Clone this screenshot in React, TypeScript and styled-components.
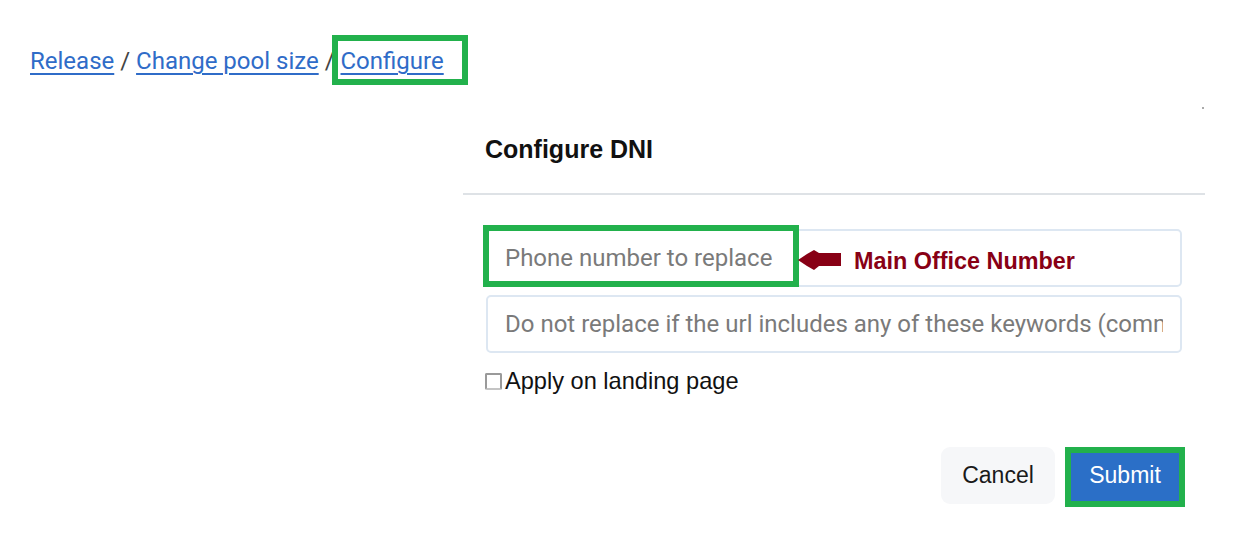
import React from "react";
import styled, { createGlobalStyle } from "styled-components";

const GlobalStyle = createGlobalStyle`
  html, body { margin: 0; padding: 0; background: #ffffff; }
  body { font-family: "Liberation Sans", Arial, sans-serif; color: #212529; }
  *, *::before, *::after { box-sizing: border-box; }
`;

const Page = styled.div`
  width: 1234px;
  height: 534px;
  overflow: hidden;
  display: flex;
  flex-direction: column;
`;

const Breadcrumb = styled.nav`
  padding: 47px 0 0 30px;
  height: 100px;
  font-family: "Roboto", "Liberation Sans", sans-serif;
  font-size: 24px;
  line-height: 28px;
  color: #333;
  white-space: nowrap;
`;

const Crumb = styled.a`
  color: #2f6cc8;
  text-decoration: underline;
  text-decoration-thickness: 2px;
  text-underline-offset: 4px;
`;

const Highlight = styled.span`
  position: relative;
  &::after {
    content: "";
    position: absolute;
    left: -9px;
    top: -12px;
    width: 136px;
    height: 50px;
    border: 6px solid #22b14c;
    pointer-events: none;
  }
`;

const Sep = styled.span`
  color: #444;
`;

const Modal = styled.section`
  margin-left: 463px;
  width: 742px;
  position: relative;
  display: flex;
  flex-direction: column;
`;

const Dot = styled.span`
  position: absolute;
  right: 1px;
  top: 7px;
  width: 2px;
  height: 2px;
  background: #aaa;
`;

const Header = styled.header`
  padding: 34px 22px 29px;
  border-bottom: 2px solid #dee2e6;
`;

const Title = styled.h5`
  margin: 0;
  font-family: "Liberation Sans", Arial, sans-serif;
  font-weight: 700;
  font-size: 25px;
  line-height: 30px;
  color: #111;
`;

const Body = styled.div`
  padding: 34px 23px 0 22px;
  display: flex;
  flex-direction: column;
  gap: 8px;
`;

const Field = styled.div`
  position: relative;
  margin-left: 1px;
`;

const Input = styled.input`
  display: block;
  width: 100%;
  height: 58px;
  padding: 0 17px;
  border: 2px solid #dde7f2;
  border-radius: 5px;
  font-family: "Roboto", "Liberation Sans", sans-serif;
  font-size: 24px;
  color: #333;
  background: #fff;
  outline: none;
  &::placeholder {
    color: #7a7a7a;
  }
`;

const FieldMark = styled.span`
  position: absolute;
  left: -3px;
  top: -4px;
  width: 316px;
  height: 62px;
  border: 6px solid #22b14c;
  pointer-events: none;
`;

const Note = styled.span`
  position: absolute;
  left: 312px;
  top: 19px;
  display: flex;
  align-items: center;
  gap: 12px;
  pointer-events: none;
`;

const NoteText = styled.span`
  font-family: "Liberation Sans", Arial, sans-serif;
  font-weight: 700;
  font-size: 23.4px;
  line-height: 22px;
  color: #880015;
  padding-top: 2px;
`;

const CheckRow = styled.label`
  display: flex;
  align-items: center;
  margin-top: 5px;
  font-family: "Liberation Sans", Arial, sans-serif;
  font-size: 23.6px;
  line-height: 30px;
  color: #111;
`;

const Check = styled.input`
  width: 17px;
  height: 17px;
  margin: 0 3px 0 0;
  appearance: none;
  border: 2px solid #9a9a9a;
  border-bottom-color: #c4c4c4;
  border-radius: 2px;
  background: #fff;
`;

const Footer = styled.div`
  display: flex;
  justify-content: flex-end;
  gap: 10px;
  padding: 51px 20px 0 0;
`;

const Button = styled.button<{ $primary?: boolean }>`
  position: relative;
  height: 57px;
  padding: 0;
  width: ${(p) => (p.$primary ? "120px" : "114px")};
  border: none;
  border-radius: ${(p) => (p.$primary ? "0" : "9px")};
  background: ${(p) => (p.$primary ? "#2b6fc7" : "#f6f7f9")};
  color: ${(p) => (p.$primary ? "#ffffff" : "#1a1a1a")};
  font-family: "Liberation Sans", Arial, sans-serif;
  font-size: 23px;
  cursor: pointer;
`;

const ButtonMark = styled.span`
  position: absolute;
  left: 0;
  top: 0;
  width: 120px;
  height: 60px;
  border: 6px solid #22b14c;
  pointer-events: none;
`;

const Arrow = () => (
  <svg width="44" height="22" viewBox="0 0 44 22" aria-hidden="true">
    <polygon
      points="0,11 9,5 16,1 21,4 43,4 43,17 21,17 16,21 9,17"
      fill="#880015"
    />
  </svg>
);

export default function App() {
  return (
    <Page>
      <GlobalStyle />
      <Breadcrumb>
        <Crumb href="#">Release</Crumb>
        <Sep> / </Sep>
        <Crumb href="#">Change pool size</Crumb>
        <Sep> / </Sep>
        <Highlight>
          <Crumb href="#">Configure</Crumb>
        </Highlight>
      </Breadcrumb>
      <Modal>
        <Dot />
        <Header>
          <Title>Configure DNI</Title>
        </Header>
        <Body>
          <Field>
            <Input placeholder="Phone number to replace" />
            <FieldMark />
            <Note>
              <Arrow />
              <NoteText>Main Office Number</NoteText>
            </Note>
          </Field>
          <Field>
            <Input placeholder="Do not replace if the url includes any of these keywords (comma separated)" />
          </Field>
          <CheckRow>
            <Check type="checkbox" />
            Apply on landing page
          </CheckRow>
        </Body>
        <Footer>
          <Button>Cancel</Button>
          <Button $primary>
            Submit
            <ButtonMark />
          </Button>
        </Footer>
      </Modal>
    </Page>
  );
}
